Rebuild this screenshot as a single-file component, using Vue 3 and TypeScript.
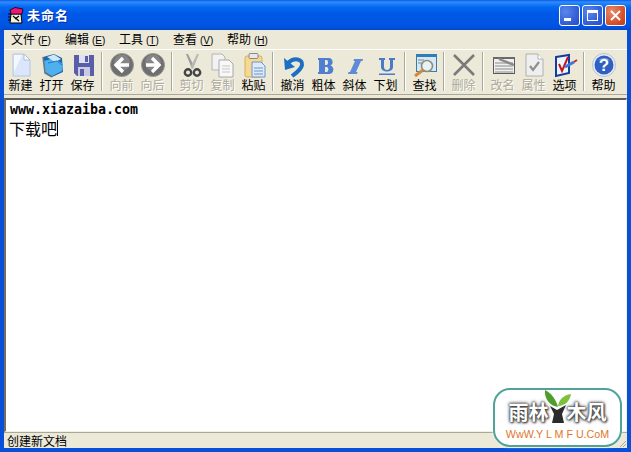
<template>
  <div class="window">
    <header class="titlebar">
      <svg class="app-icon" width="17" height="17" viewBox="0 0 17 17">
        <path d="M4 7 L14 7 L15 16 L3 16 Z" fill="#f6f0d8" stroke="#000" />
        <path d="M3 3 L8 0.500 L16 2 L15 7 L4 7 Z" fill="#f0147a" stroke="#000" stroke-width="0.8" />
        <path d="M6 9 L12 14 M12 9 L8 12" stroke="#000" stroke-width="1.2" />
        <path d="M1 7h3M1 10h3M1 13h3" stroke="#000" />
      </svg>
      <span class="title">未命名</span>
      <div class="controls">
        <span class="ctl ctl-blue"><i class="min-glyph"></i></span>
        <span class="ctl ctl-blue"><i class="max-glyph"></i></span>
        <span class="ctl ctl-red">
          <svg width="13" height="13" viewBox="0 0 13 13">
            <path d="M2 2 L11 11 M11 2 L2 11" stroke="#fff" stroke-width="2" />
          </svg>
        </span>
      </div>
    </header>

    <div class="body">
      <nav class="menubar">
        <span v-for="m in menus" :key="m.label" class="menu-item">
          {{ m.label }}<span class="accel">(<u>{{ m.key }}</u>)</span>
        </span>
      </nav>

      <div class="toolbar">
        <template v-for="(b, i) in buttons" :key="i">
          <span v-if="b === null" class="sep"></span>
          <div v-else class="tool" :class="{ disabled: b.disabled }">
            <svg class="tool-icon" width="26" height="26" viewBox="0 0 26 26" v-html="icons[b.icon]"></svg>
            <span class="tool-label">{{ b.label }}</span>
          </div>
        </template>
      </div>

      <main class="editor">
        <div class="line-url">www.xiazaiba.com</div>
        <div class="line-text">下载吧<i class="caret"></i></div>
      </main>

      <footer class="statusbar">
        <span>创建新文档</span>
        <svg class="grip" width="8" height="8" viewBox="0 0 8 8">
          <path d="M7 1 L1 7 M7 4 L4 7" stroke="#aca899" />
        </svg>
      </footer>
    </div>

    <div class="watermark">
      <div class="wm-logo">
        <span class="wm-char">雨林</span>
        <svg class="wm-tree" width="28" height="33" viewBox="0 0 28 33">
          <path d="M14 17 C12 9 7 3 1 0 C0 9 6 16 14 17 Z" fill="#4f9d2c" />
          <path d="M14 16 C15 9 20 5 27 4 C26 11 21 16 14 16 Z" fill="#7cc13c" />
          <path d="M6 16 L13 20 L22 15 L18 24 L20 33 L8 33 L10 24 Z" fill="#2b2b2b" />
        </svg>
        <span class="wm-char">木风</span>
      </div>
      <div class="wm-url">WwW.Y L M F U.CoM</div>
    </div>
  </div>
</template>

<script setup lang="ts">
interface ToolButton {
  label: string;
  icon: string;
  disabled?: boolean;
}

const menus = [
  { label: '文件', key: 'F' },
  { label: '编辑', key: 'E' },
  { label: '工具', key: 'T' },
  { label: '查看', key: 'V' },
  { label: '帮助', key: 'H' },
];

const buttons: (ToolButton | null)[] = [
  { label: '新建', icon: 'new' },
  { label: '打开', icon: 'open' },
  { label: '保存', icon: 'save' },
  null,
  { label: '向前', icon: 'back', disabled: true },
  { label: '向后', icon: 'forward', disabled: true },
  null,
  { label: '剪切', icon: 'cut', disabled: true },
  { label: '复制', icon: 'copy', disabled: true },
  { label: '粘贴', icon: 'paste' },
  null,
  { label: '撤消', icon: 'undo' },
  { label: '粗体', icon: 'bold' },
  { label: '斜体', icon: 'italic' },
  { label: '下划', icon: 'underline' },
  null,
  { label: '查找', icon: 'find' },
  null,
  { label: '删除', icon: 'delete', disabled: true },
  null,
  { label: '改名', icon: 'rename', disabled: true },
  { label: '属性', icon: 'props', disabled: true },
  { label: '选项', icon: 'options' },
  null,
  { label: '帮助', icon: 'help' },
];

const icons: Record<string, string> = {
  new: `<path d="M5 2 H16 L22 8 V24 H5 Z" fill="#dbe6fa" stroke="#b4c6e4"/><path d="M6 3 H14 L6 20 Z" fill="#f4f8ff"/><path d="M16 2 V8 H22 Z" fill="#fff" stroke="#a8bcdc"/>`,
  open: `<path d="M4 5 L15 2 L23 6 L24 20 L13 25 L6 21 Z" fill="#1b66ad"/><path d="M5 9 L15 6 L24 12 L23 19 L13 24 L6 20 Z" fill="#4fb0ee"/><path d="M8 5 L15 2.500 L22 7 L16 10 Z" fill="#cfe8f8"/><path d="M4 5 L6 21 L13 25" fill="none" stroke="#6a7684" stroke-width="1.5"/><path d="M9 11 L18 9 L23 13" fill="none" stroke="#1f78c0"/>`,
  save: `<path d="M4 3 H24 V24 H7 L4 21 Z" fill="#5a5ea8"/><rect x="9" y="3" width="10" height="8" fill="#dfe1f0"/><rect x="15" y="4" width="3" height="6" fill="#5a5ea8"/><rect x="8" y="15" width="12" height="9" fill="#c9cbe4"/><rect x="10" y="17" width="4" height="7" fill="#5a5ea8"/>`,
  back: `<circle cx="13" cy="13" r="11.500" fill="#6e6e6e" stroke="#989898"/><circle cx="13" cy="10.500" r="8" fill="#858585"/><path d="M14 6 L7 13 L14 20 M8 13 H20" fill="none" stroke="#fff" stroke-width="3.400"/>`,
  forward: `<circle cx="13" cy="13" r="11.500" fill="#6e6e6e" stroke="#989898"/><circle cx="13" cy="10.500" r="8" fill="#858585"/><path d="M12 6 L19 13 L12 20 M18 13 H6" fill="none" stroke="#fff" stroke-width="3.400"/>`,
  cut: `<path d="M7 2 L9 2 L15 14 L13 17 Z" fill="#9e9e9e"/><path d="M20 2 L18 2 L12 14 L14 17 Z" fill="#b8b8b8"/><circle cx="9" cy="20.500" r="3.200" fill="none" stroke="#444" stroke-width="2.400"/><circle cx="18" cy="20.500" r="3.200" fill="none" stroke="#444" stroke-width="2.400"/>`,
  copy: `<path d="M2 2 H12 L15 5 V18 H2 Z" fill="#f2f2f2" stroke="#b4b4b4"/><path d="M9 8 H19 L23 12 V25 H9 Z" fill="#f8f8f8" stroke="#a8a8a8"/><path d="M12 14 H20 M12 17 H20 M12 20 H20" stroke="#c4c4c4"/>`,
  paste: `<rect x="4" y="4" width="17" height="21" rx="2" fill="#f6d890" stroke="#d0b060"/><rect x="8" y="1.500" width="9" height="5" rx="1" fill="#e8e8e8" stroke="#8a8a8a"/><path d="M11 10 H20 L24 14 V25 H11 Z" fill="#dceafa" stroke="#6f94c8"/><path d="M13 16 H22 M13 19 H22 M13 22 H22" stroke="#6f94c8"/>`,
  undo: `<path d="M4 6 L5 18 L15 15 Z" fill="#1d6fc4"/><path d="M8 11 C14 5 23 7 22 13 C21 18 16 21 12 24" fill="none" stroke="#1d6fc4" stroke-width="4"/>`,
  bold: `<path d="M7 6 H18 C22 6 23 12 19.500 13.500 C24 15 23 22 18 22 H7 V20 H8 V8 H7 Z M14 8 V13 H15.500 C17.500 13 17.500 8 15.500 8 Z M14 15 V20 H15.500 C18 20 18 15 15.500 15 Z" fill="#4f7fd0" fill-rule="evenodd"/>`,
  italic: `<path d="M12 7 H21 L20.500 9 H19 L14 20 H15.500 L15 22 H6 L6.500 20 H8 L13 9 H11.500 Z" fill="#5f8ad6"/>`,
  underline: `<path d="M6 6 H12 V8 H11 V15 C11 19 17 19 17 15 V8 H16 V6 H22 V8 H20 V15 C20 21 8 21 8 15 V8 H6 Z" fill="#4a7ac8"/><rect x="6" y="21.500" width="16" height="1.500" fill="#4a7ac8"/>`,
  find: `<rect x="4.500" y="2.500" width="20" height="17" fill="#d6e8f5" stroke="#3a7ca8"/><rect x="4" y="2" width="21" height="3" fill="#2e7fb8"/><path d="M6 8 H12 M6 11 H10" stroke="#888"/><circle cx="15" cy="14" r="5.500" fill="#e8f3f6" stroke="#8f8f78" stroke-width="1.600"/><path d="M11 18 L3 24" stroke="#d08a3a" stroke-width="3"/>`,
  delete: `<path d="M3 3 L23 23 M23 3 L3 23" stroke="#7a7a7a" stroke-width="2.600"/>`,
  rename: `<rect x="3.500" y="5.500" width="21" height="16" fill="#f0f0f0" stroke="#5a5a5a"/><rect x="3" y="5" width="22" height="2" fill="#6a6a6a"/><path d="M5 11 H23 M5 14 H23 M5 17 H23 M5 20 H23" stroke="#8a8a8a"/><path d="M9 7 L24 13" stroke="#8a8a8a" stroke-width="2.400"/>`,
  props: `<path d="M5 2 H17 L22 7 V24 H5 Z" fill="#efefef" stroke="#b0b0b0"/><path d="M17 2 V7 H22" fill="#fff" stroke="#b0b0b0"/><path d="M9 14 L12 18 L18 10" fill="none" stroke="#8f8f8f" stroke-width="2.200"/>`,
  options: `<path d="M4 5 L17 3 V21 L4 24 Z" fill="#eef4ff" stroke="#143c9c" stroke-width="2"/><path d="M7 12 L10 19 L16 5" fill="none" stroke="#c01818" stroke-width="2"/><path d="M13 15 L22 10" stroke="#3a7cd8" stroke-width="3"/><path d="M22 10 L25 8" stroke="#c82828" stroke-width="2"/>`,
  help: `<circle cx="13" cy="13" r="11.500" fill="#e6ebf6" stroke="#b8c2d8"/><circle cx="13" cy="13" r="9.500" fill="#2f5fc0"/><path d="M7 9 C9 5 17 5 19 9 C16 7 10 7 7 9 Z" fill="#7f9fe0"/><text x="13" y="19" text-anchor="middle" font-size="17" font-weight="700" font-family="Liberation Sans, sans-serif" fill="#fff">?</text>`,
};
</script>

<style>
html,
body {
  margin: 0;
  background: #0054e3;
}
</style>

<style scoped>
.window {
  position: relative;
  width: 631px;
  height: 452px;
  display: flex;
  flex-direction: column;
  overflow: hidden;
  background: #0a4fd8;
  font-family: "Noto Sans CJK SC", "Liberation Sans", sans-serif;
  font-size: 12px;
  color: #000;
}
.titlebar {
  height: 30px;
  flex: none;
  display: flex;
  align-items: center;
  padding: 0 5px 0 7px;
  gap: 3px;
  background: linear-gradient(180deg, #0a5ae6 0, #2f8cfb 2px, #1a7ef8 4px, #0468f2 7px, #0058e6 14px, #0055e4 24px, #0150dc 28px, #0046c8 30px);
}
.title {
  color: #fff;
  font-weight: 700;
  font-size: 13px;
  line-height: 16px;
  letter-spacing: 1px;
  text-shadow: 1px 1px 0 #0a2f9c;
}
.controls {
  margin-left: auto;
  display: flex;
  gap: 2px;
}
.ctl {
  width: 21px;
  height: 21px;
  box-sizing: border-box;
  border: 1px solid #fff;
  border-radius: 3px;
  display: flex;
  align-items: center;
  justify-content: center;
  position: relative;
}
.ctl-blue {
  background: radial-gradient(circle at 30% 30%, #5a88ea 0, #3560d8 60%, #2a4cc4 100%);
}
.ctl-red {
  background: radial-gradient(circle at 30% 30%, #e88a6a 0, #d8532e 60%, #bc3a18 100%);
}
.min-glyph {
  position: absolute;
  left: 4px;
  bottom: 4px;
  width: 7px;
  height: 3px;
  background: #fff;
}
.max-glyph {
  width: 11px;
  height: 11px;
  box-sizing: border-box;
  border: 1px solid #fff;
  border-top-width: 3px;
}
.body {
  flex: 1;
  min-height: 0;
  margin: 0 4px 4px;
  display: flex;
  flex-direction: column;
  background: #ece9d8;
}
.menubar {
  height: 19px;
  flex: none;
  display: flex;
  padding-left: 7px;
  align-items: center;
}
.menu-item {
  width: 54px;
  flex: none;
  line-height: 19px;
  white-space: nowrap;
}
.accel {
  font-family: "Liberation Sans", sans-serif;
  font-size: 10px;
  margin-left: 3px;
}
.toolbar {
  height: 46px;
  flex: none;
  box-sizing: border-box;
  border-top: 1px solid #fff;
  border-bottom: 1px solid #aca899;
  display: flex;
  align-items: stretch;
  padding-left: 1px;
}
.tool {
  width: 31px;
  flex: none;
  display: flex;
  flex-direction: column;
  align-items: center;
  padding-top: 2px;
}
.tool-icon {
  display: block;
  flex: none;
}
.tool-label {
  line-height: 14px;
  white-space: nowrap;
}
.tool.disabled .tool-label {
  color: #aca899;
  text-shadow: 1px 1px 0 #fff;
}
.sep {
  width: 8px;
  flex: none;
  position: relative;
}
.sep::after {
  content: "";
  position: absolute;
  left: 3px;
  top: 2px;
  bottom: 3px;
  width: 1px;
  background: #aca899;
  box-shadow: 1px 0 0 #fff;
}
.editor {
  flex: 1;
  min-height: 0;
  margin-top: 3px;
  box-sizing: border-box;
  background: #fff;
  border-top: 2px solid #5f5d54;
  border-left: 2px solid #716f64;
  border-right: 1px solid #f1efe2;
  border-bottom: 1px solid #f1efe2;
  padding: 2px 0 0 4px;
}
.line-url {
  font-family: "DejaVu Sans Mono", "Liberation Mono", monospace;
  font-weight: 700;
  font-size: 13.3px;
  line-height: 16px;
}
.line-text {
  font-size: 16px;
  line-height: 20px;
  display: flex;
  align-items: center;
  margin-left: -1px;
}
.caret {
  width: 1px;
  height: 16px;
  background: #000;
}
.statusbar {
  height: 16px;
  flex: none;
  box-sizing: border-box;
  border-top: 1px solid #aca899;
  padding-left: 3px;
  line-height: 15px;
  display: flex;
  justify-content: space-between;
  align-items: flex-end;
}
.grip {
  display: block;
}
.watermark {
  position: absolute;
  left: 493px;
  top: 388px;
  width: 129px;
  height: 59px;
  box-sizing: border-box;
  border: 2px solid #4fa39a;
  border-radius: 17px;
  background: #fff;
  display: flex;
  flex-direction: column;
  align-items: center;
  box-shadow: 0 0 3px rgba(255, 255, 255, 0.8);
}
.wm-logo {
  display: flex;
  align-items: flex-end;
  justify-content: center;
  height: 33px;
  margin-bottom: 5px;
}
.wm-tree {
  margin: 0 -5px;
}
.wm-char {
  color: #fff;
  font-size: 20px;
  font-weight: 700;
  line-height: 22px;
  text-shadow: 0 0 2px #444, 0 0 3px #444, 1px 1px 2px #444, 0 0 4px #777;
}
.wm-url {
  color: #e0762c;
  font-family: "Liberation Sans", sans-serif;
  font-size: 10.7px;
  line-height: 13px;
  white-space: nowrap;
}
</style>
